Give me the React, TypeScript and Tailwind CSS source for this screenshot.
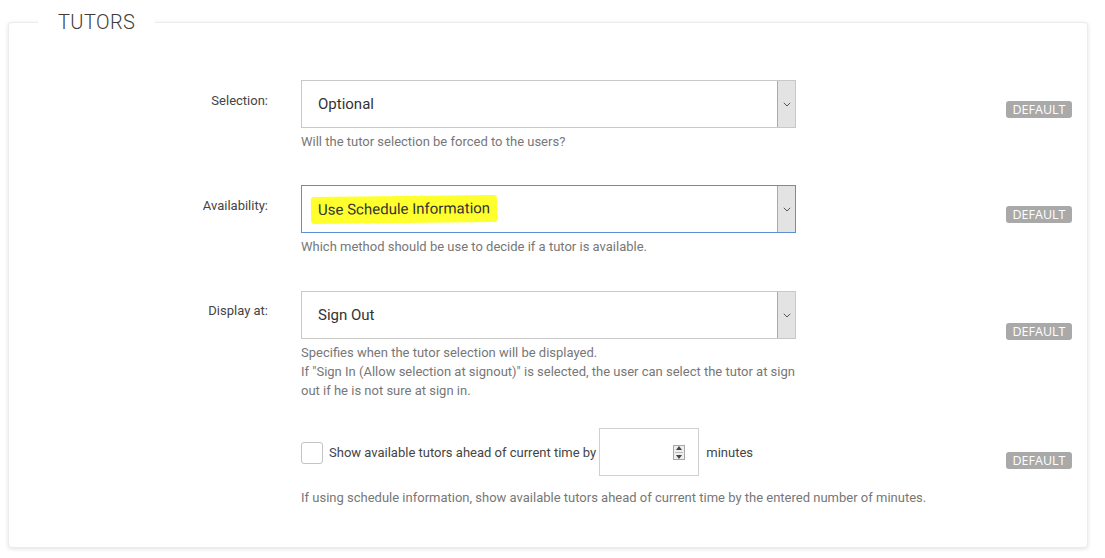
import React from 'react';

const Arrow: React.FC = () => (
  <div className="w-[18px] h-full bg-[#e3e3e3] border-l border-[#a9a9a9] flex items-center justify-center">
    <svg width="8" height="5" viewBox="0 0 8 5" fill="none">
      <path d="M0.8 0.8 L4 4 L7.2 0.8" stroke="#555" strokeWidth="1" />
    </svg>
  </div>
);

const SelectBox: React.FC<{ value: React.ReactNode; focused?: boolean }> = ({ value, focused }) => (
  <div
    className={`h-[48px] w-[495px] flex items-stretch bg-white border ${
      focused ? 'border-[#5b8fd6]' : 'border-[#c8c8c8]'
    }`}
  >
    <div className="flex-1 flex items-center pl-[16px] text-[15px] text-[#333]">{value}</div>
    <Arrow />
  </div>
);

const Badge: React.FC<{ mt: string }> = ({ mt }) => (
  <div className={`${mt} h-[17px] w-[66px] rounded-[3px] bg-[#a9a9a9] text-white text-[12.5px] leading-[17px] text-center font-['Open_Sans',sans-serif]`}>
    DEFAULT
  </div>
);

const Help: React.FC<{ children: React.ReactNode }> = ({ children }) => (
  <p className="mt-[4px] text-[13px] leading-[19px] text-[#777] w-[495px]">{children}</p>
);

const App: React.FC = () => {
  return (
    <div className="w-[1105px] h-[558px] bg-white font-['Roboto',sans-serif] pt-[22px] pl-[8px]">
      <div className="relative w-[1080px] h-[526px] bg-white rounded-[4px] border border-[#ececec] shadow-[0_1px_4px_rgba(0,0,0,0.12)] pr-[15px]">
        <div className="absolute -top-[13px] left-[29px] bg-white px-[20px] text-[20px] leading-[24px] font-light text-[#3c3c3c] tracking-[0.4px]">
          TUTORS
        </div>

        {/* Selection */}
        <div className="flex items-start mt-[57px]">
          <div className="w-[259px] text-right text-[13px] text-[#444] pt-[11px]">Selection:</div>
          <div className="ml-[33px]">
            <SelectBox value="Optional" />
            <Help>Will the tutor selection be forced to the users?</Help>
          </div>
          <div className="flex-1" />
          <Badge mt="mt-[21px]" />
        </div>

        {/* Availability */}
        <div className="flex items-start mt-[34px]">
          <div className="w-[259px] text-right text-[13px] text-[#444] pt-[11px]">Availability:</div>
          <div className="ml-[33px]">
            <SelectBox
              focused
              value={
                <span className="bg-[#ffff2e] -ml-[7px] px-[7px] py-[2px] rounded-[3px] -rotate-[0.6deg] inline-block">
                  Use Schedule Information
                </span>
              }
            />
            <Help>Which method should be use to decide if a tutor is available.</Help>
          </div>
          <div className="flex-1" />
          <Badge mt="mt-[21px]" />
        </div>

        {/* Display at */}
        <div className="flex items-start mt-[35px]">
          <div className="w-[259px] text-right text-[13px] text-[#444] pt-[10px]">Display at:</div>
          <div className="ml-[33px]">
            <SelectBox value="Sign Out" />
            <Help>
              Specifies when the tutor selection will be displayed.
              <br />
              If "Sign In (Allow selection at signout)" is selected, the user can select the tutor at sign out if he is not sure at sign in.
            </Help>
          </div>
          <div className="flex-1" />
          <Badge mt="mt-[32px]" />
        </div>

        {/* Ahead of time */}
        <div className="flex items-start mt-[28px]">
          <div className="w-[259px]" />
          <div className="ml-[33px]">
            <div className="flex items-center h-[48px]">
              <div className="w-[22px] h-[22px] mt-[2px] rounded-[3px] border border-[#c4c4c4] bg-white" />
              <span className="ml-[6px] mt-[2px] text-[13px] text-[#444]">Show available tutors ahead of current time by</span>
              <div className="ml-[3px] w-[100px] h-[48px] border border-[#d0d0d0] bg-white flex items-center justify-end pr-[13px]">
                <div className="w-[12px] h-[15px] border border-[#a8a8a8] bg-[#eee] flex flex-col items-center justify-center gap-[2px]">
                  <svg width="6" height="4" viewBox="0 0 6 4">
                    <path d="M3 0 L6 4 L0 4 Z" fill="#444" />
                  </svg>
                  <div className="w-[8px] h-px bg-[#bbb]" />
                  <svg width="6" height="4" viewBox="0 0 6 4">
                    <path d="M0 0 L6 0 L3 4 Z" fill="#444" />
                  </svg>
                </div>
              </div>
              <span className="ml-[7px] mt-[2px] text-[13px] text-[#444]">minutes</span>
            </div>
            <p className="mt-[12px] text-[13px] leading-[19px] text-[#777] whitespace-nowrap">
              If using schedule information, show available tutors ahead of current time by the entered number of minutes.
            </p>
          </div>
          <div className="flex-1" />
          <Badge mt="mt-[24px]" />
        </div>
      </div>
    </div>
  );
};

export default App;
